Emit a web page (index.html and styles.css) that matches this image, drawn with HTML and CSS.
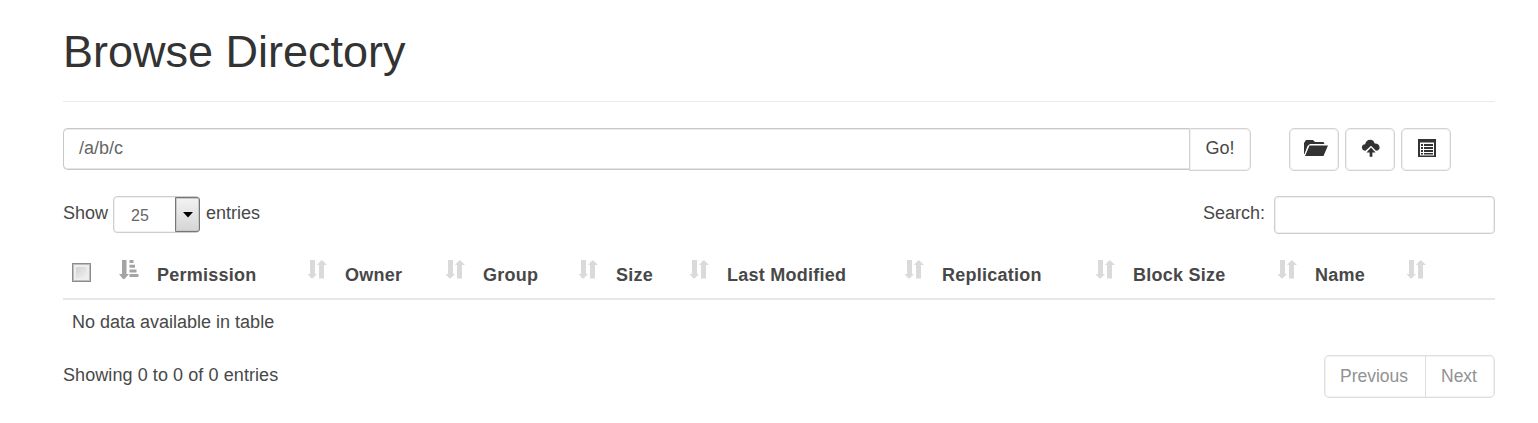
FILE: index.html
```html
<!DOCTYPE html>
<html lang="en">
<head>
<meta charset="utf-8">
<title>Browse Directory</title>
<link rel="stylesheet" href="styles.css">
</head>
<body>
<svg class="defs" aria-hidden="true">
  <symbol id="sort" viewBox="0 0 20 19">
    <path d="M3 0h5v14H10l-4.500 4.500H4.500L.500 14h2.500zM12 18.500V5H10l4-4.500h1.500L20 5h-3v13.500z"/>
  </symbol>
  <symbol id="sort-asc" viewBox="0 0 20 19">
    <path d="M3 0h4.500v14H10l-4.500 5H4L0 14h3zM10.500 0h4v3h-4zM10.500 4.700h5.500v3h-5.500zM10.500 9.500h7v3h-7zM10.500 14h9v3h-9z"/>
  </symbol>
</svg>
<main class="page">
  <h1 class="title">Browse Directory</h1>
  <div class="toolbar">
    <div class="path-group">
      <div class="path-input">/a/b/c</div>
      <button class="go">Go!</button>
    </div>
    <div class="actions">
      <button class="action" aria-label="Create directory"><svg width="26" height="20" viewBox="0 0 26 20"><path d="M2 16V5l2-3h7l2 2h8.500l1 2H8L5.500 8 2.500 16zM3 18 7.500 7.500H26L21.500 18z"/></svg></button>
      <button class="action" aria-label="Upload"><svg width="20" height="20" viewBox="0 0 22 20"><path d="M5 13a4 4 0 0 1-4-3.500C1 7 2.700 6 4.500 6 5.200 3 7 1 10 1c3 0 4.200 1.500 5 4 3-.3 5.500 1.500 5.500 4.500 0 2-1.500 3.500-4 3.500L11 7.500z"/><path d="M11 9.500 16 15h-3.500v4.500h-3V15H6z"/></svg></button>
      <button class="action" aria-label="Cut and paste"><svg width="20" height="20" viewBox="0 0 20 20"><path fill-rule="evenodd" d="M1 1h18v18H1zM3 4.500v13h14v-13z"/><path d="M4 6h2v2H4zM7 6h9v2H7zM4 9h2v2H4zM7 9h9v2H7zM4 12h2v2H4zM7 12h9v2H7zM4 15h2v1.500H4zM7 15h9v1.500H7z"/></svg></button>
    </div>
  </div>
  <div class="controls">
    <div class="length">
      <span>Show</span>
      <div class="select"><span class="value">25</span><span class="drop"><svg width="10" height="6" viewBox="0 0 10 6"><path d="M0 0h10L5 5.500z"/></svg></span></div>
      <span>entries</span>
    </div>
    <div class="search"><span>Search:</span><input class="search-input" type="text" aria-label="Search"></div>
  </div>
  <div class="table">
    <div class="head">
      <div class="th"><span class="check"></span><svg class="sort active"><use href="#sort-asc"/></svg></div>
      <div class="th"><span>Permission</span><svg class="sort"><use href="#sort"/></svg></div>
      <div class="th"><span>Owner</span><svg class="sort"><use href="#sort"/></svg></div>
      <div class="th"><span>Group</span><svg class="sort"><use href="#sort"/></svg></div>
      <div class="th"><span>Size</span><svg class="sort"><use href="#sort"/></svg></div>
      <div class="th"><span>Last Modified</span><svg class="sort"><use href="#sort"/></svg></div>
      <div class="th"><span>Replication</span><svg class="sort"><use href="#sort"/></svg></div>
      <div class="th"><span>Block Size</span><svg class="sort"><use href="#sort"/></svg></div>
      <div class="th"><span>Name</span><svg class="sort"><use href="#sort"/></svg></div>
    </div>
    <div class="empty">No data available in table</div>
  </div>
  <div class="footer">
    <div class="info">Showing 0 to 0 of 0 entries</div>
    <div class="pager"><span class="prev">Previous</span><span class="next">Next</span></div>
  </div>
</main>
</body>
</html>
```
FILE: styles.css
```css
* { box-sizing: border-box; }
body {
  margin: 0;
  background: #fff;
  color: #484848;
  font: 18px/26px "Liberation Sans", Arial, sans-serif;
}
.defs { display: none; }
.page { padding: 25px 43px 0 63px; }
.title {
  margin: 0;
  height: 77px;
  border-bottom: 1px solid #ebebeb;
  color: #333;
  font-size: 45px;
  font-weight: 400;
  line-height: 54px;
}
.toolbar { display: flex; margin-top: 26px; height: 43px; }
.path-group { display: flex; width: 1188px; }
.path-input {
  flex: 1;
  height: 42px;
  padding: 6px 15px;
  border: 1px solid #c8c8c8;
  border-right: 0;
  border-radius: 5px 0 0 5px;
  box-shadow: inset 0 1px #ececec, inset 0 -1px #e4e4e4;
  color: #666;
  line-height: 26px;
}
button { margin: 0; padding: 0; background: #fff; font: inherit; color: #484848; }
.go {
  width: 62px;
  height: 43px;
  padding-bottom: 4px;
  border: 1px solid #d2d2d2;
  border-radius: 0 5px 5px 0;
  box-shadow: inset 0 0 0 1px #f1f1f1;
}
.actions { display: flex; gap: 6px; margin-left: 38px; }
.action {
  display: flex;
  justify-content: center;
  width: 50px;
  height: 43px;
  padding: 9px 0 0 2px;
  border: 1px solid #d2d2d2;
  border-radius: 5px;
  box-shadow: inset 0 0 0 1px #f1f1f1;
}
.action svg { fill: #333; }
.controls { display: flex; justify-content: space-between; margin-top: 25px; height: 38px; }
.length, .search { display: flex; }
.length > span, .search > span { padding-top: 4px; }
.select {
  display: flex;
  width: 87px;
  height: 37px;
  margin: 0 6px 0 5px;
  border: 1px solid #cecece;
  border-radius: 4px;
  box-shadow: inset 0 0 0 1px #f1f1f1;
}
.value { flex: 1; padding: 6px 0 0 17px; color: #666; font-size: 16px; }
.drop {
  display: flex;
  align-items: center;
  justify-content: center;
  width: 25px;
  margin: 0 -1px 0 0;
  border: 1px solid #777;
  border-radius: 0 3px 3px 0;
  background: linear-gradient(#f3f3f3, #d5d5d5);
  box-shadow: inset 0 0 0 1px #c9c9c9;
}
.search-input {
  width: 221px;
  height: 38px;
  margin-left: 9px;
  border: 1px solid #cecece;
  border-radius: 4px;
  box-shadow: inset 0 0 0 1px #efefef;
}
.head {
  display: grid;
  grid-template-columns: 85px 188px 138px 133px 111px 215px 191px 182px 129px;
  height: 66px;
  padding-top: 26px;
  border-bottom: 2px solid #e7e7e7;
}
.th {
  display: flex;
  justify-content: space-between;
  padding: 0 9px;
  font-weight: 700;
  letter-spacing: 0.25px;
  white-space: nowrap;
}
.th > span { padding-top: 2px; }
.th .check {
  width: 19px;
  height: 19px;
  margin-top: 3px;
  border: 1px solid #8c8c8c;
  background: linear-gradient(135deg, #c9c9c9, #fafafa);
  box-shadow: inset 0 0 0 1px #bdbdbd, inset 0 0 0 3px #eee;
}
.sort { width: 20px; height: 19px; fill: #dadada; }
.sort.active { fill: #a4a4a4; }
.empty { height: 55px; padding: 9px 9px; }
.footer { display: flex; justify-content: space-between; }
.info { padding-top: 7px; letter-spacing: 0.08px; }
.pager {
  display: flex;
  width: 171px;
  height: 43px;
  border: 1px solid #dedede;
  border-radius: 5px;
  box-shadow: inset 0 0 0 1px #f3f3f3;
  color: #929292;
  font-size: 17.5px;
}
.pager span { padding: 7px 0 0 15px; }
.prev { width: 101px; border-right: 1px solid #dedede; }
```
